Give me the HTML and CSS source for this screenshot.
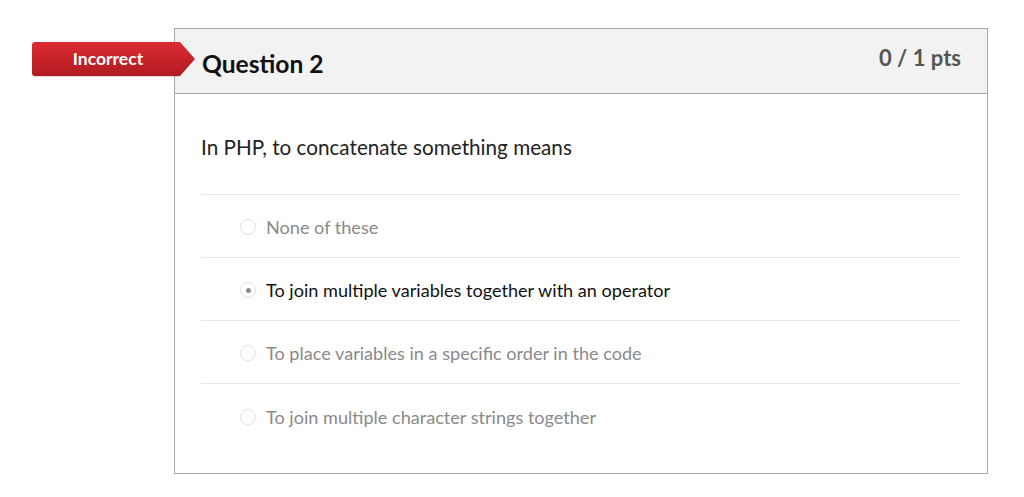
FILE: index.html
```html
<!DOCTYPE html>
<html>
<head>
<meta charset="utf-8">
<link rel="stylesheet" href="styles.css">
</head>
<body>
<div class="page">
  <div class="card">
    <div class="badge">
      <span class="badge-text">Incorrect</span>
      <svg class="badge-tip" width="15" height="34" viewBox="0 0 15 34"><defs><linearGradient id="g" x1="0" y1="0" x2="0" y2="1"><stop offset="0" stop-color="#dc2a32"/><stop offset="1" stop-color="#b01b21"/></linearGradient></defs><polygon points="0,0 0,34 15,17" fill="url(#g)"/></svg>
    </div>
    <div class="header">
      <div class="name">Question 2</div>
      <div class="points">0 / 1 pts</div>
    </div>
    <div class="body">
      <div class="qtext">In PHP, to concatenate something means</div>
      <div class="answer muted"><span class="radio"></span><span>None of these</span></div>
      <div class="answer selected"><span class="radio on"></span><span>To join multiple variables together with an operator</span></div>
      <div class="answer muted"><span class="radio"></span><span>To place variables in a specific order in the code</span></div>
      <div class="answer muted last"><span class="radio"></span><span>To join multiple character strings together</span></div>
    </div>
  </div>
</div>
</body>
</html>
```
FILE: styles.css
```css
html, body {
  margin: 0;
  padding: 0;
  background: #fff;
  font-family: Lato, "Open Sans", sans-serif;
}
.page {
  padding: 28px 0 0 174px;
}
.card {
  position: relative;
  width: 812px;
  height: 444px;
  border: 1px solid #a8a8a8;
  background: #fff;
}
.badge {
  position: absolute;
  left: -143px;
  top: 13px;
  display: flex;
  height: 34px;
}
.badge-text {
  width: 148px;
  height: 34px;
  line-height: 34px;
  text-align: center;
  padding-left: 4px;
  box-sizing: border-box;
  color: #fff;
  font-weight: 700;
  font-size: 17.5px;
  background: linear-gradient(#dc2a32, #b01b21);
  border-radius: 3px 0 0 3px;
  box-shadow: 0 1px 1px rgba(0,0,0,0.15);
}
.badge-tip {
  display: block;
}
.header {
  height: 64px;
  background: #f2f2f2;
  border-bottom: 1px solid #a8a8a8;
  display: flex;
  justify-content: space-between;
  padding: 0 26px 0 27px;
}
.name {
  font-size: 24.6px;
  font-weight: 700;
  color: #111;
  padding-top: 20px;
}
.points {
  font-size: 22px;
  font-weight: 700;
  color: #555;
  padding-top: 15px;
}
.body {
  padding: 0 27px 0 26px;
}
.qtext {
  font-size: 20.7px;
  color: #222;
  height: 101px;
  box-sizing: border-box;
  padding-top: 41px;
  border-bottom: 1px solid #e6e6e6;
}
.answer {
  display: flex;
  align-items: center;
  gap: 10px;
  height: 63px;
  padding-left: 39px;
  padding-top: 2px;
  font-size: 18.1px;
  border-bottom: 1px solid #e6e6e6;
  box-sizing: border-box;
}
.answer.last {
  border-bottom: none;
}
.muted {
  color: #8a8a8a;
}
.selected {
  color: #111;
}
.radio {
  width: 16px;
  height: 16px;
  border: 1px solid #e2e2e2;
  border-radius: 50%;
  box-sizing: border-box;
  display: flex;
  align-items: center;
  justify-content: center;
  background: #fff;
}
.radio.on::after {
  content: "";
  width: 5px;
  height: 5px;
  border-radius: 50%;
  background: #8c8c8c;
}
```
